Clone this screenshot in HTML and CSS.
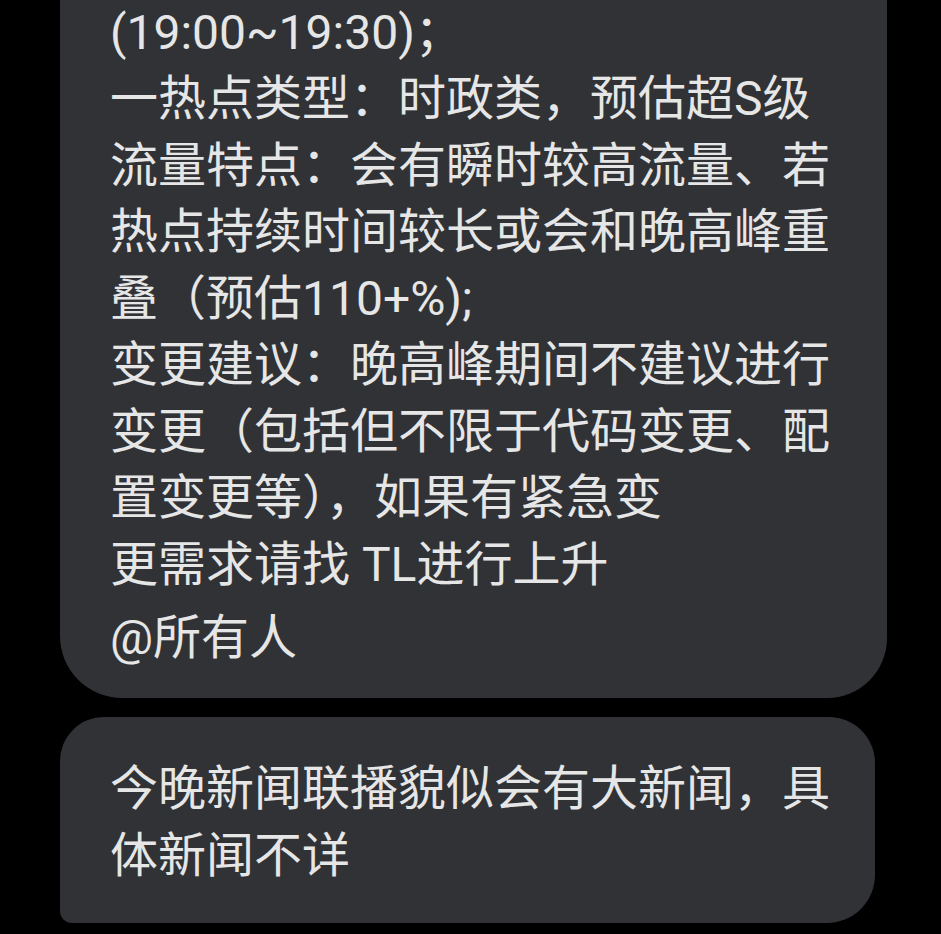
FILE: index.html
```html
<!DOCTYPE html>
<html lang="zh-CN">
<head>
<meta charset="utf-8">
<title>消息</title>
<link rel="stylesheet" href="styles.css">
</head>
<body>
<main class="chat">
  <div class="bubble bubble-first">
    <div class="line">(19:00~19:30)；</div>
    <div class="line">一热点类型：时政类，预估超S级</div>
    <div class="line">流量特点：会有瞬时较高流量、若</div>
    <div class="line">热点持续时间较长或会和晚高峰重</div>
    <div class="line">叠（预估110+%);</div>
    <div class="line">变更建议：晚高峰期间不建议进行</div>
    <div class="line">变更（包括但不限于代码变更、配</div>
    <div class="line">置变更等），如果有紧急变</div>
    <div class="line">更需求请找 TL进行上升</div>
    <div class="line mention">@所有人</div>
  </div>
  <div class="bubble bubble-second">
    <div class="line">今晚新闻联播貌似会有大新闻，具</div>
    <div class="line">体新闻不详</div>
  </div>
</main>
</body>
</html>
```

FILE: styles.css
```css
html, body {
  margin: 0;
  padding: 0;
  background: #000000;
}

body {
  width: 941px;
  height: 934px;
  overflow: hidden;
  font-family: Roboto, "Noto Sans CJK SC", sans-serif;
  color: #e6e6e6;
}

.chat {
  display: flex;
  flex-direction: column;
  align-items: flex-start;
  gap: 19px;
  padding-left: 60px;
}

.bubble {
  box-sizing: border-box;
  background: #303236;
  padding-left: 50px;
  font-size: 48px;
  line-height: 66.5px;
}

.line {
  white-space: nowrap;
}

.bubble-first {
  width: 827px;
  margin-top: -80px;
  padding-top: 79.5px;
  padding-bottom: 27px;
  border-radius: 56px 56px 60px 62px;
}

.mention {
  margin-top: 6.5px;
}

.bubble-second {
  width: 815px;
  padding-top: 39px;
  padding-bottom: 34px;
  border-radius: 44px 46px 48px 12px;
}
```
